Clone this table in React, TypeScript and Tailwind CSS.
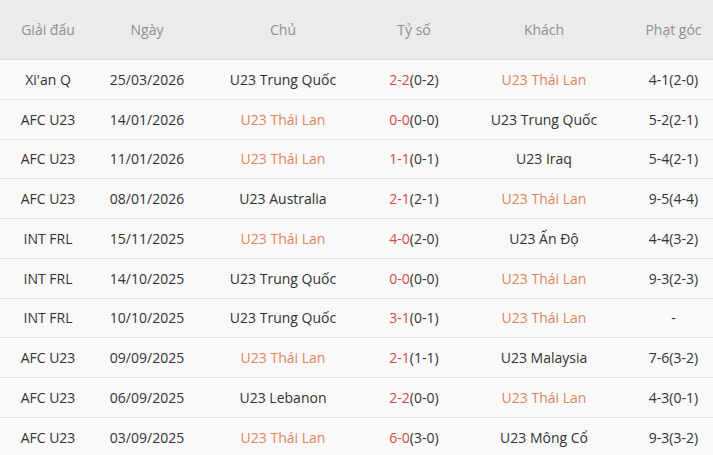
const rows = [
  { league: "Xi'an Q", date: "25/03/2026", home: "U23 Trung Quốc", ft: "2-2", ht: "(0-2)", away: "U23 Thái Lan", corner: "4-1(2-0)" },
  { league: "AFC U23", date: "14/01/2026", home: "U23 Thái Lan", ft: "0-0", ht: "(0-0)", away: "U23 Trung Quốc", corner: "5-2(2-1)" },
  { league: "AFC U23", date: "11/01/2026", home: "U23 Thái Lan", ft: "1-1", ht: "(0-1)", away: "U23 Iraq", corner: "5-4(2-1)" },
  { league: "AFC U23", date: "08/01/2026", home: "U23 Australia", ft: "2-1", ht: "(2-1)", away: "U23 Thái Lan", corner: "9-5(4-4)" },
  { league: "INT FRL", date: "15/11/2025", home: "U23 Thái Lan", ft: "4-0", ht: "(2-0)", away: "U23 Ấn Độ", corner: "4-4(3-2)" },
  { league: "INT FRL", date: "14/10/2025", home: "U23 Trung Quốc", ft: "0-0", ht: "(0-0)", away: "U23 Thái Lan", corner: "9-3(2-3)" },
  { league: "INT FRL", date: "10/10/2025", home: "U23 Trung Quốc", ft: "3-1", ht: "(0-1)", away: "U23 Thái Lan", corner: "-" },
  { league: "AFC U23", date: "09/09/2025", home: "U23 Thái Lan", ft: "2-1", ht: "(1-1)", away: "U23 Malaysia", corner: "7-6(3-2)" },
  { league: "AFC U23", date: "06/09/2025", home: "U23 Lebanon", ft: "2-2", ht: "(0-0)", away: "U23 Thái Lan", corner: "4-3(0-1)" },
  { league: "AFC U23", date: "03/09/2025", home: "U23 Thái Lan", ft: "6-0", ht: "(3-0)", away: "U23 Mông Cổ", corner: "9-3(3-2)" },
];

// last column runs a few px past the viewport, like the source table
const cols = "grid grid-cols-[96px_102px_170px_92px_168px_91px] w-[719px]";

function Team({ name }: { name: string }) {
  const thai = name === "U23 Thái Lan";
  return <span className={thai ? "text-[#e0855a]" : "text-[#333333]"}>{name}</span>;
}

export default function App() {
  return (
    <div className="w-[713px] h-[455px] overflow-hidden bg-[#f9f9f9] text-[14px] text-[#333333]" style={{ fontFamily: '"Open Sans", "Liberation Sans", sans-serif' }}>
      {/* header */}
      <div className={`${cols} h-[60px] items-center bg-[#ebebeb] border-b border-[#dedede] text-[#8f8f8f] text-center`}>
        <div>Giải đấu</div>
        <div>Ngày</div>
        <div>Chủ</div>
        <div>Tỷ số</div>
        <div>Khách</div>
        <div>Phạt góc</div>
      </div>
      {rows.map((r, i) => (
        <div key={i} className={`${cols} h-[39.75px] items-center border-b border-[#e3e3e3] text-center`}>
          <div>{r.league}</div>
          <div>{r.date}</div>
          <div><Team name={r.home} /></div>
          <div>
            <span className="text-[#d24b4b]">{r.ft}</span>
            <span>{r.ht}</span>
          </div>
          <div><Team name={r.away} /></div>
          <div>{r.corner}</div>
        </div>
      ))}
    </div>
  );
}
